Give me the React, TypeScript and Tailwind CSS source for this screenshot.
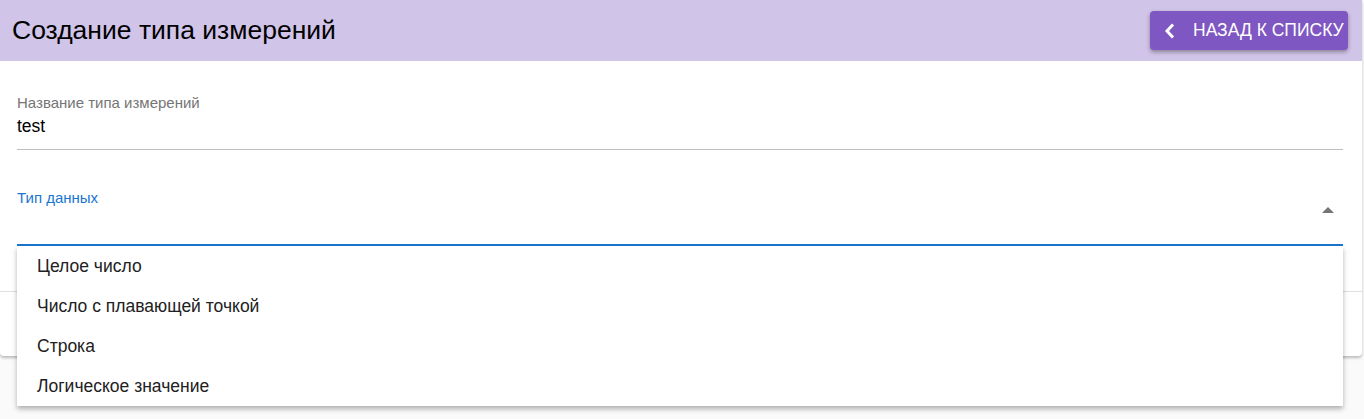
const options = [
  "Целое число",
  "Число с плавающей точкой",
  "Строка",
  "Логическое значение",
];

export default function App() {
  return (
    <div
      className="min-h-[419px] bg-[#fafafa] text-[#212121]"
      style={{ fontFamily: '"Liberation Sans", Arial, sans-serif' }}
    >
      <div className="relative w-[1362px] rounded-b bg-white shadow-[0_2px_3px_rgba(0,0,0,0.25)]">
        {/* Header */}
        <div className="flex h-[61px] items-center justify-between bg-[#d1c4e9] pl-3 pr-[14px]">
          <h1 className="text-[26.5px] leading-none text-black">Создание типа измерений</h1>
          <button className="flex h-[39px] w-[198px] items-center gap-[18px] rounded bg-[#7e57c2] pl-[15px] text-[17.5px] uppercase text-white shadow-[0_2px_4px_rgba(0,0,0,0.35)]">
            <svg width="10" height="16" viewBox="0 0 10 16" fill="none">
              <path d="M8 1.5 L2 8 L8 14.5" stroke="white" strokeWidth="3" />
            </svg>
            Назад к списку
          </button>
        </div>

        {/* Form */}
        <div className="pl-[17px] pr-[19px] pt-[34px] pb-[45px]">
          <div className="border-b border-[#bdbdbd] pb-[13px]">
            <div className="text-[15px] leading-[16px] text-[#757575]">Название типа измерений</div>
            <div className="mt-[5px] text-[17.5px] leading-5 text-black">test</div>
          </div>

          <div className="mt-[40px] flex h-[56px] items-start justify-between border-b-2 border-[#1976d2]">
            <div className="text-[15px] leading-[16px] text-[#1976d2]">Тип данных</div>
            <svg width="12" height="6" viewBox="0 0 12 6" className="mt-[17px] mr-[9px]">
              <path d="M0 6 L6 0 L12 6 Z" fill="#757575" />
            </svg>
          </div>
        </div>

        <div className="h-[65px] border-t border-[#e0e0e0]" />

        {/* Open select menu */}
        <div className="absolute left-[17px] top-[246px] w-[1326px] bg-white shadow-[0_3px_5px_rgba(0,0,0,0.3)]">
          {options.map((o) => (
            <div key={o} className="flex h-[40px] items-center px-5 text-[17.5px] text-[#212121]">
              {o}
            </div>
          ))}
        </div>
      </div>
    </div>
  );
}
